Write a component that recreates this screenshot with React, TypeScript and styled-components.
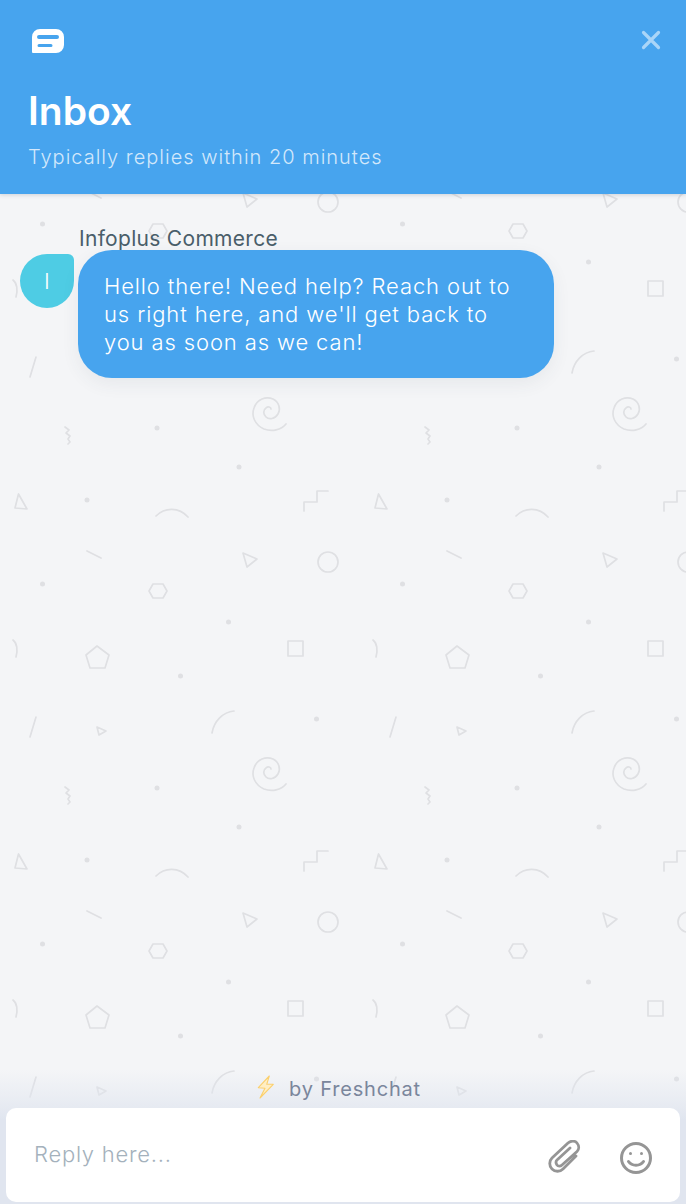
import React from 'react'
import styled, { createGlobalStyle } from 'styled-components'

const GlobalStyle = createGlobalStyle`
  html, body {
    margin: 0;
    padding: 0;
    height: 100%;
  }

  body {
    font-family: Inter, "Noto Sans", sans-serif;
    background: #f4f5f7;
  }
`

const tile = `<svg xmlns="http://www.w3.org/2000/svg" width="360" height="360" viewBox="0 380 360 360">
<g fill="none" stroke="#dfe0e3" stroke-width="1.7" stroke-linecap="round" stroke-linejoin="round">
<path d="M286 424c-5 6-14 8-22 5-9-4-13-13-10-21 3-9 12-12 19-9 6 3 8 10 5 15-3 5-9 6-12 3-3-3-3-7 0-9 2-2 5-1 5 1"/>
<path d="M65 427l4 3-3 3 4 3-2 3 2 3-2 2"/>
<path d="M18.500 494L15 508l12 1z"/>
<path d="M156 516c9-9 23-9 32 1"/>
<path d="M304 511v-9h13v-11h11"/>
<path d="M87 551l14 7"/>
<path d="M243 553l14 6-10 8z"/>
<circle cx="328" cy="562" r="10"/>
<path d="M153 584h10l4 7-4 7h-10l-4-7z"/>
<path d="M13 640c4 3 5 10 3 17"/>
<path d="M97 646l12 9-4 13H90l-4-13z"/>
<rect x="288" y="641" width="15" height="15"/>
<path d="M36 717l-6 20"/>
<path d="M97 727l9 4-7 4z"/>
<path d="M212 733c2-12 11-21 22-22"/>
</g>
<g fill="#dfe0e3">
<circle cx="157" cy="428" r="2.500"/>
<circle cx="239" cy="467" r="2.500"/>
<circle cx="87" cy="500" r="2.500"/>
<circle cx="42.500" cy="584" r="2.500"/>
<circle cx="228.500" cy="622" r="2.500"/>
<circle cx="180.500" cy="676" r="2.500"/>
<circle cx="316.500" cy="719" r="2.500"/>
</g>
</svg>`

const Page = styled.div`
  display: flex;
  flex-direction: column;
  height: 1204px;
  overflow: hidden;
`

const Header = styled.header`
  position: relative;
  z-index: 2;
  height: 194px;
  box-sizing: border-box;
  padding: 29px 28px 0;
  background: #47a4ee;
  color: #ffffff;
  box-shadow: 0 1px 4px rgba(60, 70, 90, 0.2);
`

const HeaderTop = styled.div`
  display: flex;
  justify-content: space-between;
  align-items: flex-start;
  height: 41px;
`

const Logo = styled.svg`
  display: block;
  width: 34px;
  height: 25px;
  margin-left: 3px;
`

const CloseButton = styled.svg`
  display: block;
  width: 20px;
  height: 20px;
  margin: 1px -3px 0 0;
`

const Title = styled.h1`
  margin: 18px 0 0;
  font-size: 39px;
  line-height: 45px;
  font-weight: 600;
`

const Subtitle = styled.div`
  margin-top: 12px;
  font-size: 20px;
  line-height: 24px;
  letter-spacing: 1px;
  font-weight: 350;
  color: #d3e8fb;
`

const ChatArea = styled.main`
  flex: 1;
  display: flex;
  flex-direction: column;
  min-height: 0;
  background-color: #f4f5f7;
  background-image: url("data:image/svg+xml,${encodeURIComponent(tile)}");
  background-position: 0 186px;
  background-size: 360px 360px;
`

const Messages = styled.div`
  flex: 1;
  padding: 33px 0 0 20px;
`

const MessageRow = styled.div`
  display: grid;
  grid-template-columns: 54px auto;
  column-gap: 4px;
  justify-content: start;
`

const SenderName = styled.div`
  grid-column: 2;
  padding-left: 1px;
  font-size: 21px;
  line-height: 23px;
  letter-spacing: 0.3px;
  color: #4a5e6a;
`

const Avatar = styled.div`
  display: flex;
  align-items: center;
  justify-content: center;
  width: 54px;
  height: 54px;
  margin-top: 4px;
  border-radius: 50% 6px 50% 50%;
  background: #4ecce4;
  color: #ffffff;
  font-size: 22px;
  font-weight: 300;
`

const Bubble = styled.div`
  box-sizing: border-box;
  width: 476px;
  padding: 22px 26px 22px;
  border-radius: 34px;
  background: #47a4ee;
  color: #ffffff;
  font-size: 22px;
  font-weight: 350;
  line-height: 28px;
  letter-spacing: 0.88px;
  box-shadow: 0 6px 18px rgba(60, 70, 90, 0.07);
`

const Footer = styled.footer`
  padding: 0 6px 2px;
  background: linear-gradient(to bottom, rgba(226, 231, 240, 0) 0, rgba(226, 231, 240, 0.6) 30px, #e0e5ef 50px);
`

const Branding = styled.div`
  display: flex;
  align-items: center;
  justify-content: center;
  gap: 14px;
  height: 38px;
  padding-right: 10px;
  font-size: 20px;
  letter-spacing: 0.8px;
  color: #7a869c;
`

const Bolt = styled.svg`
  display: block;
  width: 20px;
  height: 24px;
  margin-top: -4px;
`

const InputCard = styled.div`
  display: flex;
  align-items: center;
  height: 94px;
  box-sizing: border-box;
  padding: 0 26px 0 28px;
  border-radius: 10px;
  background: #ffffff;
`

const ReplyText = styled.div`
  flex: 1;
  margin-top: -2px;
  font-size: 22px;
  font-weight: 350;
  letter-spacing: 0.75px;
  color: #a4b1bc;
`

const IconRow = styled.div`
  display: flex;
  align-items: center;
  gap: 34px;
  margin-top: 6px;
`

const IconSlot = styled.svg`
  display: block;
  width: 36px;
  height: 36px;
  color: #959595;
`

export default function App() {
  return (
    <>
      <GlobalStyle />
      <Page>
        <Header>
          <HeaderTop>
            <Logo viewBox="0 0 34 25">
              <path
                fill="#ffffff"
                fillRule="evenodd"
                d="M9 0h16a8 8 0 0 1 8 8v8a8 8 0 0 1-8 8H2a1 1 0 0 1-1-1V8a8 8 0 0 1 8-8zM8 6a2 2 0 0 0 0 4h18a2 2 0 0 0 0-4zM8 15a1.500 1.500 0 0 0 0 3h12a1.500 1.500 0 0 0 0-3z"
              />
            </Logo>
            <CloseButton viewBox="0 0 20 20">
              <path d="M2.500 2.500l15 15M17.500 2.500l-15 15" stroke="#a9d5f8" strokeWidth="3.200" strokeLinecap="round" />
            </CloseButton>
          </HeaderTop>
          <Title>Inbox</Title>
          <Subtitle>Typically replies within 20 minutes</Subtitle>
        </Header>
        <ChatArea>
          <Messages>
            <MessageRow>
              <SenderName>Infoplus Commerce</SenderName>
              <Avatar>I</Avatar>
              <Bubble>
                Hello there! Need help? Reach out to us right here, and we'll get back to you as soon as we can!
              </Bubble>
            </MessageRow>
          </Messages>
          <Footer>
            <Branding>
              <Bolt viewBox="0 0 20 24">
                <path d="M14.300 1L3.300 12.700l6.700.6L5 23l13.300-13.700h-6.600z" fill="#ffeec4" stroke="#fbd06e" strokeWidth="1.100" strokeLinejoin="round" />
              </Bolt>
              by Freshchat
            </Branding>
            <InputCard>
              <ReplyText>Reply here...</ReplyText>
              <IconRow>
                <IconSlot viewBox="0 0 36 36" fill="none" stroke="currentColor" strokeWidth="2.800" strokeLinecap="round" strokeLinejoin="round">
                  <path d="M28 16L15 29c-3 3-8 3-11 0s-3-8 0-11L20 3c3-2.500 7-2.500 9 0s2.500 6 0 8.500L14 25c-1.500 1.500-4 1.500-5 0s-1.500-3.500 0-5L22 8" />
                </IconSlot>
                <IconSlot viewBox="0 0 36 36" fill="none" stroke="currentColor" strokeWidth="3" strokeLinecap="round">
                  <circle cx="18" cy="18" r="14.500" />
                  <path d="M10.500 21.500c3.500 5 11.500 5 15 0" />
                  <circle cx="12.500" cy="13.500" r="1.500" fill="currentColor" stroke="none" />
                  <circle cx="23.500" cy="13.500" r="1.500" fill="currentColor" stroke="none" />
                </IconSlot>
              </IconRow>
            </InputCard>
          </Footer>
        </ChatArea>
      </Page>
    </>
  )
}
